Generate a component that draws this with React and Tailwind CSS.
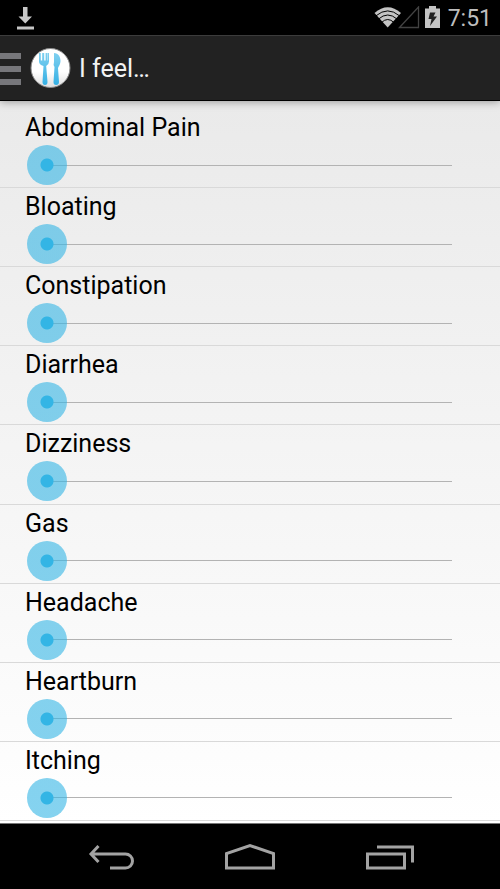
import React, { useState } from "react";

const SYMPTOMS = [
  "Abdominal Pain",
  "Bloating",
  "Constipation",
  "Diarrhea",
  "Dizziness",
  "Gas",
  "Headache",
  "Heartburn",
  "Itching",
];

function StatusBar() {
  return (
    <div className="flex h-[35px] items-center justify-between bg-black pl-[17px] pr-[8px] text-[#bebebe]">
      <svg className="h-[24px] w-[17px]" viewBox="0 0 17 24" fill="#c8c8c8" aria-label="Download complete">
        <path d="M6 1h4.500v9.500H15L8.300 17.500 1.500 10.500H6z" />
        <path d="M0 20.500h17v3H0z" />
      </svg>
      <div className="flex items-center">
        <svg className="h-[24px] w-[46px]" viewBox="0 0 46 24" aria-label="Wi-Fi and mobile signal">
          <path d="M0.500 7Q13.700 -4.500 27 7L13.700 21.500Z" fill="#c4c4c4" />
          <g fill="none" stroke="#000" strokeWidth="1">
            <path d="M2 9.800Q13.700 0 25.500 9.800" />
            <path d="M4.500 13Q13.700 5 23 13" />
            <path d="M7.500 16.500Q13.700 10.500 20 16.500" />
          </g>
          <path d="M25.500 21.500L44.500 1V21.500Z" fill="none" stroke="#434343" strokeWidth="1.300" />
        </svg>
        <svg className="ml-[5px] h-[24px] w-[15px]" viewBox="0 0 15 24" aria-label="Battery charging">
          <path d="M4 0h7v2.500h4V22H0V2.500h4z" fill="#c4c4c4" />
          <path d="M5 6.500h5.500L8.500 10.500H12L5 20l1.500-7H3.500z" fill="#222" />
        </svg>
        <span className="ml-[8px] pt-[2px] text-[23px] leading-[33px]">7:51</span>
      </div>
    </div>
  );
}

function ActionBar() {
  return (
    <header className="relative z-10 flex h-[66px] items-center border-b border-t border-b-black border-t-[#3c3c3c] bg-[#222] shadow-[0_1px_8px_rgba(0,0,0,0.35)]">
      <button type="button" aria-label="Open menu" className="flex w-[21px] flex-col gap-[7px] pt-[2px]">
        <span className="h-[6px] w-full bg-[#77777b]" />
        <span className="h-[6px] w-full bg-[#77777b]" />
        <span className="h-[6px] w-full bg-[#77777b]" />
      </button>
      <svg className="ml-[9px] h-[42px] w-[41px]" viewBox="0 0 41 42" aria-hidden="true">
        <defs>
          <linearGradient id="cutlery" x1="0" y1="0" x2="0" y2="1">
            <stop offset="0" stopColor="#7fd0f0" />
            <stop offset="1" stopColor="#35b0e4" />
          </linearGradient>
          <linearGradient id="plate" x1="0" y1="0" x2="0" y2="1">
            <stop offset="0.6" stopColor="#fff" />
            <stop offset="1" stopColor="#dedede" />
          </linearGradient>
        </defs>
        <circle cx="20.500" cy="21" r="19.500" fill="url(#plate)" stroke="#8a8a8a" strokeWidth="1" />
        <path
          d="M9 6h1.800V13.500h1.400V6h2V13.500h1.400V6h2V13.500h0.400V6h1V14.500q0 3-2.800 4.500l1.300 16q0 3-2.500 3t-2.500-3L13.500 19Q9 17.500 9 14.500z"
          fill="url(#cutlery)"
        />
        <path
          d="M24 6c4.500 0 6.500 4 6.500 8 0 3-1.700 5-2.500 7l1 14q0 3-2.800 3t-2.700-3l1-15q-1.500-2-0.500-5z"
          fill="url(#cutlery)"
        />
      </svg>
      <h1 className="ml-[8px] pt-[1px] text-[25px] text-[#f3f3f3]">I feel…</h1>
    </header>
  );
}

function SymptomRow({ name }) {
  const [level, setLevel] = useState(0);
  return (
    <li className="flex flex-1 flex-col border-b border-[#d9d9d9] pl-[25px] pr-[28px]">
      <label htmlFor={name} className="pt-[3px] text-[25px] leading-[32px] text-black">
        {name}
      </label>
      <input
        id={name}
        type="range"
        min="0"
        max="10"
        value={level}
        onChange={(e) => setLevel(Number(e.target.value))}
        className="ml-[2px] h-[42px] cursor-pointer appearance-none bg-transparent bg-[linear-gradient(#b3b3b3,#b3b3b3)] bg-[length:calc(100%-40px)_1px] bg-center bg-no-repeat outline-none [&::-webkit-slider-thumb]:h-[40px] [&::-webkit-slider-thumb]:w-[40px] [&::-webkit-slider-thumb]:appearance-none [&::-webkit-slider-thumb]:rounded-full [&::-webkit-slider-thumb]:bg-[radial-gradient(circle,#33b5e5_6px,rgba(51,181,229,0.6)_7px)]"
      />
    </li>
  );
}

function NavigationBar() {
  return (
    <nav className="flex h-[66px] items-center justify-center gap-[90px] border-t border-[#777] bg-black text-[#a3a3a3]">
      <button type="button" aria-label="Back">
        <svg className="block h-[28px] w-[48px]" viewBox="0 0 48 28" fill="none" stroke="currentColor" strokeWidth="3">
          <path d="M12.500 3L5 11l7.500 8M5 11h34.500a7 7 0 0 1 0 14H24" />
        </svg>
      </button>
      <button type="button" aria-label="Home">
        <svg className="block h-[28px] w-[52px]" viewBox="0 0 52 28" fill="none" stroke="currentColor" strokeWidth="3">
          <path d="M2.500 25V10.500L26 2.500l23.500 8V25z" />
        </svg>
      </button>
      <button type="button" aria-label="Recent apps">
        <svg className="block h-[28px] w-[48px]" viewBox="0 0 48 28" fill="none" stroke="currentColor" strokeWidth="3">
          <path d="M1.500 11h37v14h-37zM11 4h35.500V19.500" />
        </svg>
      </button>
    </nav>
  );
}

export default function App() {
  return (
    <div className="flex min-h-screen flex-col font-['Roboto',sans-serif]">
      <StatusBar />
      <ActionBar />
      <main className="flex flex-1 flex-col bg-linear-to-b from-[#eaeaea] to-white pb-[2px] pt-[8px]">
        <ul className="flex flex-1 flex-col">
          {SYMPTOMS.map((name) => (
            <SymptomRow key={name} name={name} />
          ))}
        </ul>
      </main>
      <NavigationBar />
    </div>
  );
}
